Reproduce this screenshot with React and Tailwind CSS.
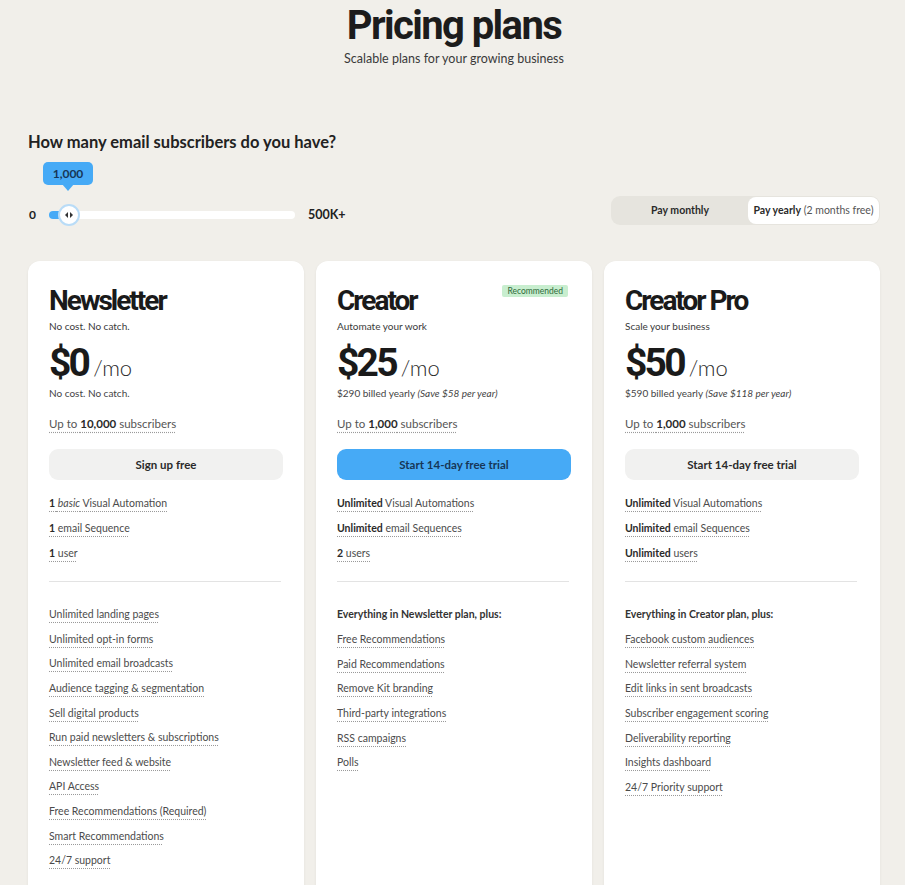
import React from "react";

const heading = { fontFamily: 'Roboto, "DejaVu Sans", sans-serif' };
const body = { fontFamily: 'Lato, "Liberation Sans", sans-serif' };

function Feature({ children }) {
  return (
    <li className="h-[24.6px] flex items-center">
      <span className="text-[10.5px] text-[#4b4b4b] underline decoration-dotted decoration-[#9a9a9a] underline-offset-[4px]">
        {children}
      </span>
    </li>
  );
}

function Card({ title, tagline, price, billed, subs, button, primary, recommended, top, plusTitle, features }) {
  return (
    <div className="bg-white rounded-[12px] shadow-[0_1px_3px_rgba(0,0,0,0.06)] px-[21px] pt-[26px] pb-[40px] min-h-[640px]">
      <div className="flex items-start justify-between">
        <h2 style={heading} className="text-[28px] leading-[28px] font-bold tracking-[-2px] text-[#1a1a1a]">{title}</h2>
        {recommended && (
          <span className="mt-[-2px] mr-[3px] bg-[#c8eecf] text-[#2f6b3a] text-[8.5px] leading-[12px] px-[5px] rounded-[2px]">
            Recommended
          </span>
        )}
      </div>
      <p className="text-[10px] text-[#3a3a3a] mt-[4px] leading-[14px]">{tagline}</p>
      <div className="flex items-baseline mt-[10px] h-[40px]">
        <span style={heading} className="text-[39px] leading-[40px] font-bold tracking-[-2.8px] text-[#1a1a1a]">{price}</span>
        <span className="text-[22px] font-light text-[#2a2a2a] ml-[5px]">/mo</span>
      </div>
      <p className="text-[10px] text-[#444] mt-[3px] leading-[14px]">{billed}</p>
      <p className="mt-[16px] text-[11.5px] leading-[16px] text-[#555]">
        <span className="underline decoration-dotted decoration-[#9a9a9a] underline-offset-[4px]">
          Up to <b className="font-bold text-[#2a2a2a]">{subs}</b> subscribers
        </span>
      </p>
      <button
        className={`mt-[17px] w-full h-[31px] rounded-[9px] text-[11.5px] font-bold ${
          primary ? "bg-[#46aaf6] text-[#173656]" : "bg-[#f1f1f0] text-[#2a2a2a]"
        }`}
      >
        {button}
      </button>
      <ul className="mt-[12px]">
        {top.map((f, i) => (
          <Feature key={i}>{f}</Feature>
        ))}
      </ul>
      <div className="h-px bg-[#e3e3e3] mt-[15px] mr-[2px]" />
      <div className="mt-[21px]">
        {plusTitle && (
          <p className="text-[10.5px] font-bold text-[#333] h-[25px] flex items-center">{plusTitle}</p>
        )}
        <ul>
          {features.map((f, i) => (
            <Feature key={i}>{f}</Feature>
          ))}
        </ul>
      </div>
    </div>
  );
}

export default function App() {
  return (
    <div style={body} className="min-h-screen bg-[#f1efea] pl-[28px] pr-[25px] pb-[40px] text-[#1a1a1a]">
      <header className="text-center pt-[2px]">
        <h1 style={heading} className="text-[40px] leading-[48px] font-bold tracking-[-1.6px] text-[#1c1c1c]">
          Pricing plans
        </h1>
        <p className="text-[12.5px] text-[#3a3a3a] mt-[1px] leading-[16px]">Scalable plans for your growing business</p>
      </header>

      <div className="mt-[65px] flex items-end justify-between">
        <div>
          <h3 className="text-[16.5px] font-bold text-[#222] leading-[22px] mt-[-1px]">How many email subscribers do you have?</h3>
          <div className="flex items-center mt-[52px] h-[20px]">
            <span className="text-[12px] font-bold text-[#222] w-[21px] pl-[1px]">0</span>
            <div className="relative w-[246px] h-[8px] rounded-full bg-white">
              <div className="absolute left-0 top-0 h-[8px] w-[20px] rounded-full bg-[#46aaf6]" />
              <div className="absolute left-[9px] top-[-7px] w-[22px] h-[22px] rounded-full bg-white border-[2px] border-[#b9dcf7] flex items-center justify-center">
                <svg width="10" height="8" viewBox="0 0 10 8">
                  <path d="M4 1 L1 4 L4 7 Z" fill="#333" />
                  <path d="M6 1 L9 4 L6 7 Z" fill="#333" />
                </svg>
              </div>
              <div className="absolute left-[-6px] top-[-49px] w-[50px] h-[23px] rounded-[5px] bg-[#46aaf6] flex items-center justify-center text-[12px] font-bold text-[#173656]">
                1,000
                <div className="absolute bottom-[-6px] left-[19px] w-0 h-0 border-l-[6px] border-r-[6px] border-t-[7px] border-l-transparent border-r-transparent border-t-[#46aaf6]" />
              </div>
            </div>
            <span className="text-[12.5px] font-bold text-[#222] ml-[13px]">500K+</span>
          </div>
        </div>
        <div className="flex items-center bg-[#e6e4de] rounded-[9px] p-[1px] h-[29px] mb-[0px] w-[269px]">
          <button className="flex-1 text-[10.5px] font-bold text-[#2a2a2a]">Pay monthly</button>
          <button className="w-[131px] h-[27px] bg-white rounded-[8px] text-[10.5px] text-[#2a2a2a]">
            <b className="font-bold">Pay yearly</b> <span className="text-[#555]">(2 months free)</span>
          </button>
        </div>
      </div>

      <div className="grid grid-cols-3 gap-[12px] mt-[36px]">
        <Card
          title="Newsletter"
          tagline="No cost. No catch."
          price="$0"
          billed="No cost. No catch."
          subs="10,000"
          button="Sign up free"
          top={[
            <><b className="font-bold text-[#2a2a2a]">1</b> <i>basic</i> Visual Automation</>,
            <><b className="font-bold text-[#2a2a2a]">1</b> email Sequence</>,
            <><b className="font-bold text-[#2a2a2a]">1</b> user</>,
          ]}
          features={[
            "Unlimited landing pages",
            "Unlimited opt-in forms",
            "Unlimited email broadcasts",
            "Audience tagging & segmentation",
            "Sell digital products",
            "Run paid newsletters & subscriptions",
            "Newsletter feed & website",
            "API Access",
            "Free Recommendations (Required)",
            "Smart Recommendations",
            "24/7 support",
          ]}
        />
        <Card
          title="Creator"
          tagline="Automate your work"
          price="$25"
          billed={<>$290 billed yearly <i>(Save $58 per year)</i></>}
          subs="1,000"
          button="Start 14-day free trial"
          primary
          recommended
          top={[
            <><b className="font-bold text-[#2a2a2a]">Unlimited</b> Visual Automations</>,
            <><b className="font-bold text-[#2a2a2a]">Unlimited</b> email Sequences</>,
            <><b className="font-bold text-[#2a2a2a]">2</b> users</>,
          ]}
          plusTitle="Everything in Newsletter plan, plus:"
          features={[
            "Free Recommendations",
            "Paid Recommendations",
            "Remove Kit branding",
            "Third-party integrations",
            "RSS campaigns",
            "Polls",
          ]}
        />
        <Card
          title="Creator Pro"
          tagline="Scale your business"
          price="$50"
          billed={<>$590 billed yearly <i>(Save $118 per year)</i></>}
          subs="1,000"
          button="Start 14-day free trial"
          top={[
            <><b className="font-bold text-[#2a2a2a]">Unlimited</b> Visual Automations</>,
            <><b className="font-bold text-[#2a2a2a]">Unlimited</b> email Sequences</>,
            <><b className="font-bold text-[#2a2a2a]">Unlimited</b> users</>,
          ]}
          plusTitle="Everything in Creator plan, plus:"
          features={[
            "Facebook custom audiences",
            "Newsletter referral system",
            "Edit links in sent broadcasts",
            "Subscriber engagement scoring",
            "Deliverability reporting",
            "Insights dashboard",
            "24/7 Priority support",
          ]}
        />
      </div>
    </div>
  );
}
